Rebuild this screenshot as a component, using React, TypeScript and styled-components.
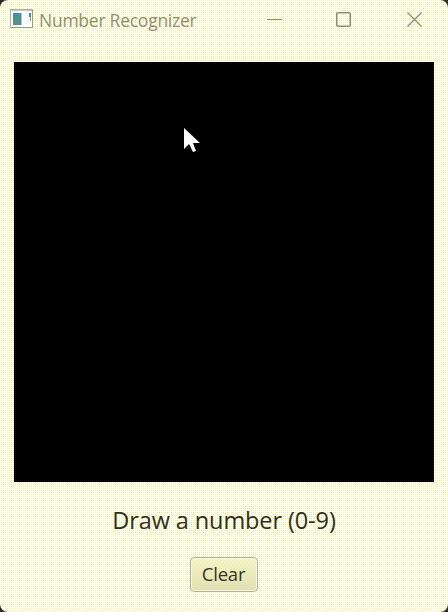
import React from "react";
import styled, { createGlobalStyle } from "styled-components";

const GlobalStyle = createGlobalStyle`
  html, body { margin: 0; padding: 0; background: #2c2b22; overflow: hidden; }
  *, *::before, *::after { box-sizing: border-box; }
`;

const Window = styled.main`
  width: 448px;
  height: 612px;
  display: flex;
  flex-direction: column;
  align-items: center;
  border-radius: 8px;
  overflow: hidden;
  font-family: "Open Sans", "Noto Sans", sans-serif;
  background-color: #fffff4;
  background-image:
    conic-gradient(from 0deg at 1px 1px, transparent 75%, #ffff50 0),
    conic-gradient(from 0deg at 1px 1px, transparent 75%, #ffff50 0),
    conic-gradient(from 0deg at 1px 1px, transparent 75%, #e2e2f8 0);
  background-size: 4px 4px, 4px 4px, 2px 2px;
  background-position: 1px 0, 3px 2px, 1px 0;
`;

const TitleBar = styled.header`
  width: 100%;
  height: 40px;
  flex: none;
  display: flex;
  align-items: center;
  padding-left: 10px;
`;

const Title = styled.h1`
  margin: -1px auto 0 5px;
  font-size: 17.5px;
  line-height: 24px;
  letter-spacing: -0.25px;
  font-weight: 400;
  color: #90906f;
  white-space: nowrap;
`;

const Drawing = styled.svg`
  display: block;
  flex: none;
`;

const DrawingArea = styled.section`
  width: 420px;
  height: 420px;
  flex: none;
  margin-top: 22px;
  padding: 64px 0 0 169px;
  background: #000;
`;

const Prompt = styled.p`
  margin: 22px 0 0;
  font-size: 23.5px;
  line-height: 32px;
  letter-spacing: -0.1px;
  color: #303018;
  white-space: nowrap;
`;

const ClearButton = styled.button`
  width: 68px;
  height: 35px;
  margin-top: 21px;
  padding: 0 1px 1px 0;
  border: 1px solid #b3b396;
  border-radius: 4px;
  background-image:
    conic-gradient(from 0deg at 1px 1px, transparent 75%, #eeee70 0),
    conic-gradient(from 0deg at 1px 1px, transparent 75%, #eeee70 0),
    linear-gradient(#f5f5d2, #dedebc);
  background-size: 4px 4px, 4px 4px, 100% 100%;
  background-position: 0 0, 2px 2px, 0 0;
  box-shadow: inset 0 0 0 1px #f6f6dc;
  font: 400 18.5px/24px "Open Sans", "Noto Sans", sans-serif;
  letter-spacing: -0.2px;
  color: #33331e;
`;

export default function App() {
  return (
    <>
      <GlobalStyle />
      <Window>
        <TitleBar>
          <Drawing width="24" height="22" viewBox="0 0 24 22" shapeRendering="crispEdges">
            <rect x="0.5" y="0.5" width="22" height="18" fill="#fcfcff" stroke="#b1b1a2" />
            <path d="M1 1.5h21" stroke="#c7c7c8" />
            <path d="M22.5 1v18M1 18.5h22" stroke="#9b9b90" />
            <rect x="3" y="4" width="8" height="12" fill="#458eaa" />
            <path d="M3 8h6v8H3z" fill="#529780" />
            <path d="M11.5 4v12" stroke="#aec8bd" />
            <path d="M19 4h2v4h-2z" fill="#4389ad" />
            <path d="M20 8h1v4h-1z" fill="#75aaa9" />
          </Drawing>
          <Title>Number Recognizer</Title>
          <Drawing width="181" height="40" viewBox="0 0 181 40" fill="none" stroke="#8f8f72">
            <path d="M0 19.5h15" />
            <rect x="69.75" y="12.75" width="13.5" height="13.5" rx="1" strokeWidth="1.5" />
            <path d="M140.5 12.5l14 14m0-14l-14 14" strokeWidth="1.3" />
          </Drawing>
        </TitleBar>
        <DrawingArea aria-label="Drawing area">
          <Drawing width="20" height="28" viewBox="0 0 20 28">
            <path d="M1 2v21l5-5 4 8 3-1-3-8h7z" fill="#fcfcff" />
          </Drawing>
        </DrawingArea>
        <Prompt>Draw a number (0-9)</Prompt>
        <ClearButton type="button">Clear</ClearButton>
      </Window>
    </>
  );
}
